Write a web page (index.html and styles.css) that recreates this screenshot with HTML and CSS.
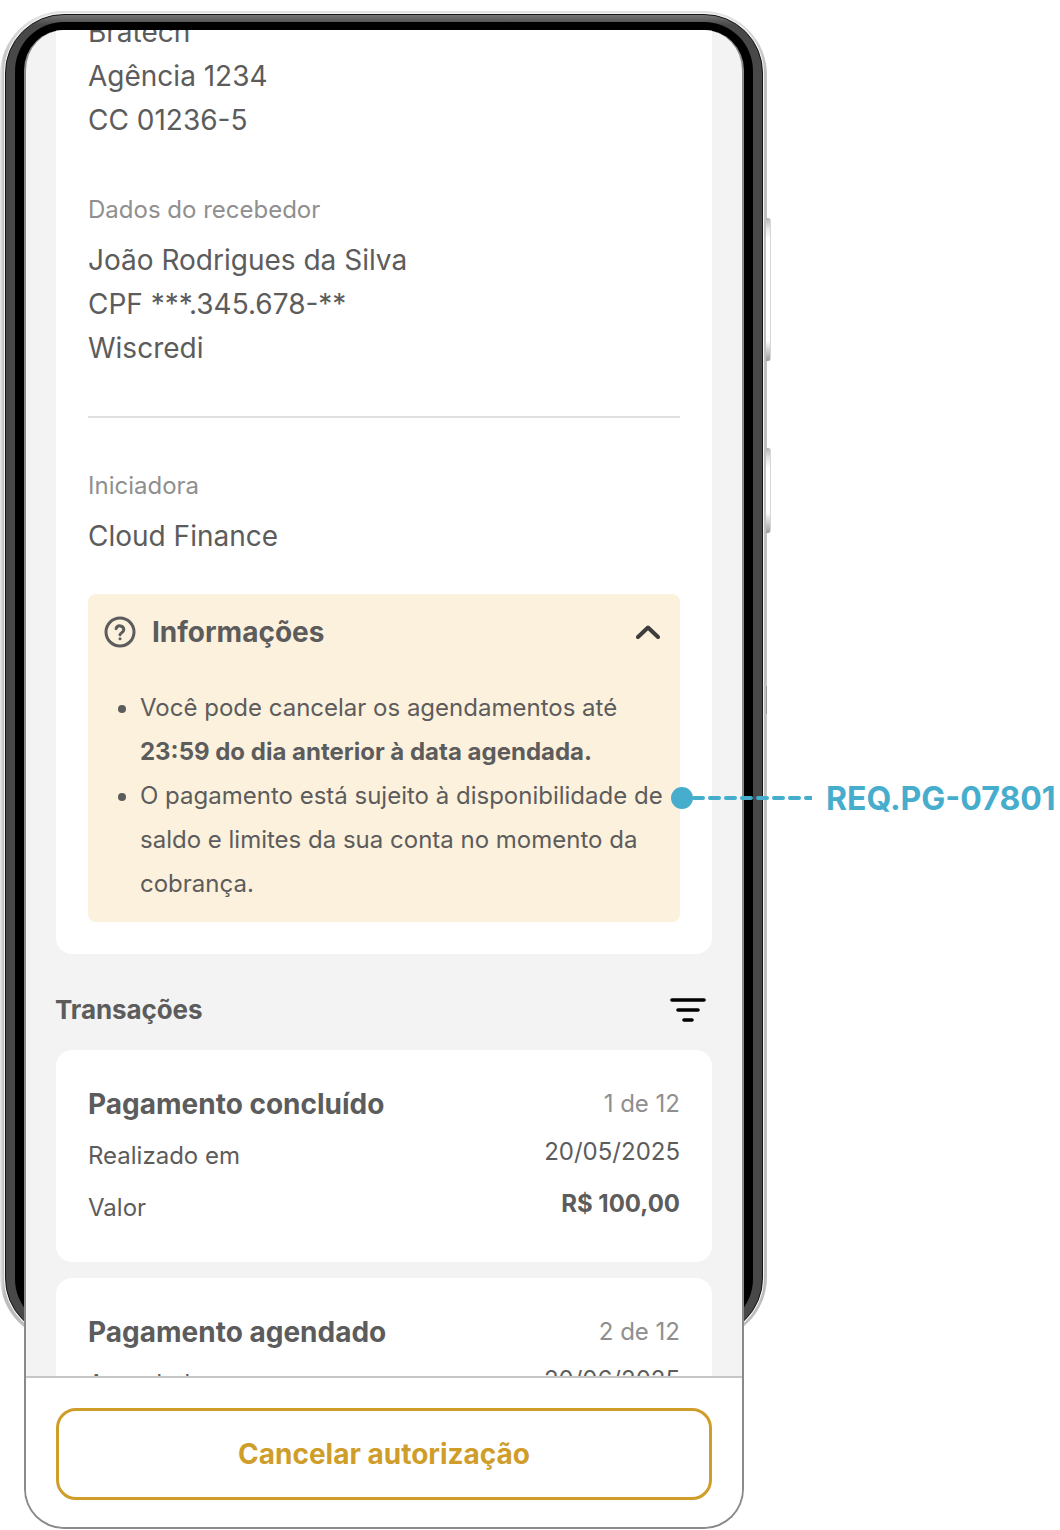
FILE: index.html
```html
<!DOCTYPE html>
<html lang="pt-BR">
<head>
<meta charset="utf-8">
<title>Autorização</title>
<link rel="stylesheet" href="styles.css">
</head>
<body>
<div class="stage">
  <div class="frame" aria-hidden="true">
    <div class="frame-metal"><div class="frame-band"><div class="frame-black"></div></div></div>
    <span class="key key-a"></span>
    <span class="key key-b"></span>
    <span class="tick"></span>
  </div>
  <div class="screen">
    <div class="scroll">
      <section class="card main-card">
        <div class="lines"><p>Bratech</p><p>Agência 1234</p><p>CC 01236-5</p></div>
        <div class="group">
          <h3 class="label">Dados do recebedor</h3>
          <div class="lines"><p>João Rodrigues da Silva</p><p>CPF ***.345.678-**</p><p>Wiscredi</p></div>
        </div>
        <hr class="divider">
        <div class="group">
          <h3 class="label">Iniciadora</h3>
          <div class="lines"><p>Cloud Finance</p></div>
        </div>
        <div class="info">
          <div class="info-head">
            <svg class="info-icon" viewBox="0 0 32 32" width="32" height="32" fill="none" stroke="#5c5c5c" stroke-width="3" stroke-linecap="round" stroke-linejoin="round"><circle cx="16" cy="16" r="14"/><path d="M12.1 12.6a3.95 3.95 0 0 1 7.7 1.2c0 2.6-3.8 3.3-3.8 5"/><path d="M16 22.8h.02"/></svg>
            <h2 class="info-title">Informações</h2>
            <svg class="chevron" viewBox="0 0 24 14" width="24" height="14" fill="none" stroke="#3d3d3d" stroke-width="4" stroke-linecap="round" stroke-linejoin="round"><path d="M2 12 12 2.5 22 12"/></svg>
          </div>
          <ul class="info-list">
            <li>Você pode cancelar os agendamentos até <strong>23:59 do dia anterior à data agendada.</strong></li>
            <li>O pagamento está sujeito à disponibilidade de saldo e limites da sua conta no momento da cobrança.</li>
          </ul>
        </div>
      </section>
      <div class="section-head">
        <h2 class="section-title">Transações</h2>
        <svg class="filter" viewBox="0 0 36 24" width="36" height="24" fill="none" stroke="#000" stroke-width="3.6" stroke-linecap="round"><path d="M2 2h32M8 12h20M14 22h8"/></svg>
      </div>
      <section class="card tx">
        <div class="tx-row"><h3 class="tx-title">Pagamento concluído</h3><span class="tx-count">1 de 12</span></div>
        <div class="tx-row"><span class="tx-key">Realizado em</span><span class="tx-val">20/05/2025</span></div>
        <div class="tx-row"><span class="tx-key">Valor</span><span class="tx-val tx-strong">R$ 100,00</span></div>
      </section>
      <section class="card tx">
        <div class="tx-row"><h3 class="tx-title">Pagamento agendado</h3><span class="tx-count">2 de 12</span></div>
        <div class="tx-row"><span class="tx-key">Agendado em</span><span class="tx-val">20/06/2025</span></div>
      </section>
    </div>
    <div class="footer"><button class="cancel" type="button">Cancelar autorização</button></div>
  </div>
  <div class="req">
    <span class="req-dot"></span>
    <svg class="req-line" viewBox="0 0 120 4" width="120" height="4"><path d="M2 2H120" fill="none" stroke="#47adcc" stroke-width="4" stroke-linecap="round" stroke-dasharray="9 7"/></svg>
    <span class="req-text">REQ.PG-07801</span>
  </div>
</div>
</body>
</html>
```
FILE: styles.css
```css
* { box-sizing: border-box; }
html, body { margin: 0; padding: 0; background: #fff; }
body { font-family: "Inter", "Liberation Sans", sans-serif; color: #5c5c5c; overflow: hidden; }
p, h2, h3, ul { margin: 0; padding: 0; }

.stage { position: relative; width: 1060px; height: 1530px; padding: 30px 0 1px 24px; overflow: hidden; }

/* device frame */
.frame { position: absolute; left: 0; top: 11px; width: 772px; height: 1330px; }
.frame-metal { position: absolute; left: 0; top: 0; width: 767px; height: 100%; border-radius: 64px; background: linear-gradient(#e2e2e2 0, #e2e2e2 4px, rgba(226, 226, 226, 0) 60px), linear-gradient(90deg, #ececec 0, #bcbcbc 4px, #bcbcbc 763px, #c4c4c4 100%); padding: 3px 4px 4px 5px; }
.frame-band { height: 100%; border-radius: 59px; background: linear-gradient(#767676, #5a5a5a 6px, #484848 10px); border: 1px solid #151515; box-shadow: 0 0 0 1px #f4f4f4; padding: 7px 9px 8px 9px; }
.frame-black { height: 100%; border-radius: 49px; background: #000; }
.key { position: absolute; left: 766px; width: 5px; background: linear-gradient(#b4b4b4, #e6e6e6 10px, #fff 20px, #fff calc(100% - 20px), #c4c4c4 calc(100% - 8px), #9c9c9c); border-right: 1px solid #d6d6d6; border-radius: 0 3px 3px 0; }
.key-a { top: 207px; height: 143px; }
.key-b { top: 437px; height: 85px; }
.tick { position: absolute; left: 766px; top: 675px; width: 1px; height: 28px; background: #9a9a9a; }

/* phone screen */
.screen { position: relative; display: flex; flex-direction: column; width: 720px; height: 1499px; background: #f3f3f3; border: 2px solid #8a8a8a; border-top: 0; border-radius: 40px; overflow: hidden; }
.scroll { height: 1346px; flex: none; padding: 0 30px; overflow: hidden; }

.card { background: #fff; border-radius: 16px; padding: 32px; }
.main-card { margin-top: -20px; border-radius: 0 0 16px 16px; padding-top: 0; }
.lines p { font-size: 28px; line-height: 44px; }
.group { margin-top: 50px; }
.label { font-size: 24px; line-height: 36px; font-weight: 400; color: #8f8f8f; margin-bottom: 10px; }
.divider { height: 2px; border: 0; margin: 46px 0 0; background: #e0e0e0; }

.info { margin-top: 36px; background: #fcf1dc; border-radius: 8px; padding: 16px 8px 16px 16px; }
.info-head { display: flex; align-items: center; height: 44px; margin-bottom: 32px; }
.info-icon { flex: none; }
.info-title { flex: 1; margin-left: 16px; font-size: 28px; line-height: 44px; font-weight: 700; }
.chevron { flex: none; margin-right: 12px; }
.info-list { list-style: disc; padding-left: 36px; font-size: 24px; line-height: 44px; }
.info-list strong { font-weight: 700; }

.section-head { display: flex; align-items: center; justify-content: space-between; height: 44px; margin: 34px 0 18px; padding-right: 6px; }
.section-title { font-size: 26px; line-height: 44px; font-weight: 700; letter-spacing: -0.1px; margin-left: -1px; }

.tx { margin-bottom: 16px; }
.tx-row { display: flex; justify-content: space-between; align-items: flex-start; margin-top: 8px; }
.tx-row:first-child { margin-top: 0; }
.tx-title { font-size: 28px; line-height: 44px; font-weight: 700; }
.tx-count { font-size: 24px; line-height: 44px; color: #8f8f8f; }
.tx-key { font-size: 24px; line-height: 44px; }
.tx-val { font-size: 24px; line-height: 36px; }
.tx-strong { font-weight: 700; }

.footer { flex: 1; background: #fff; border-top: 2px solid #c6c6c6; padding: 30px 30px 28px; }
.cancel { display: block; width: 100%; height: 92px; background: #fff; border: 3px solid #cf9e2a; border-radius: 20px; color: #cf9e2a; font: 700 28px/44px "Inter", "Liberation Sans", sans-serif; }

/* requirement marker */
.req { position: absolute; left: 671px; top: 780px; display: flex; align-items: center; height: 36px; }
.req-dot { width: 22px; height: 22px; border-radius: 50%; background: #47adcc; flex: none; }
.req-line { flex: none; margin-left: -1px; }
.req-text { margin: 2px 0 0 14px; font-size: 32px; line-height: 36px; font-weight: 700; color: #47adcc; white-space: nowrap; }
```
